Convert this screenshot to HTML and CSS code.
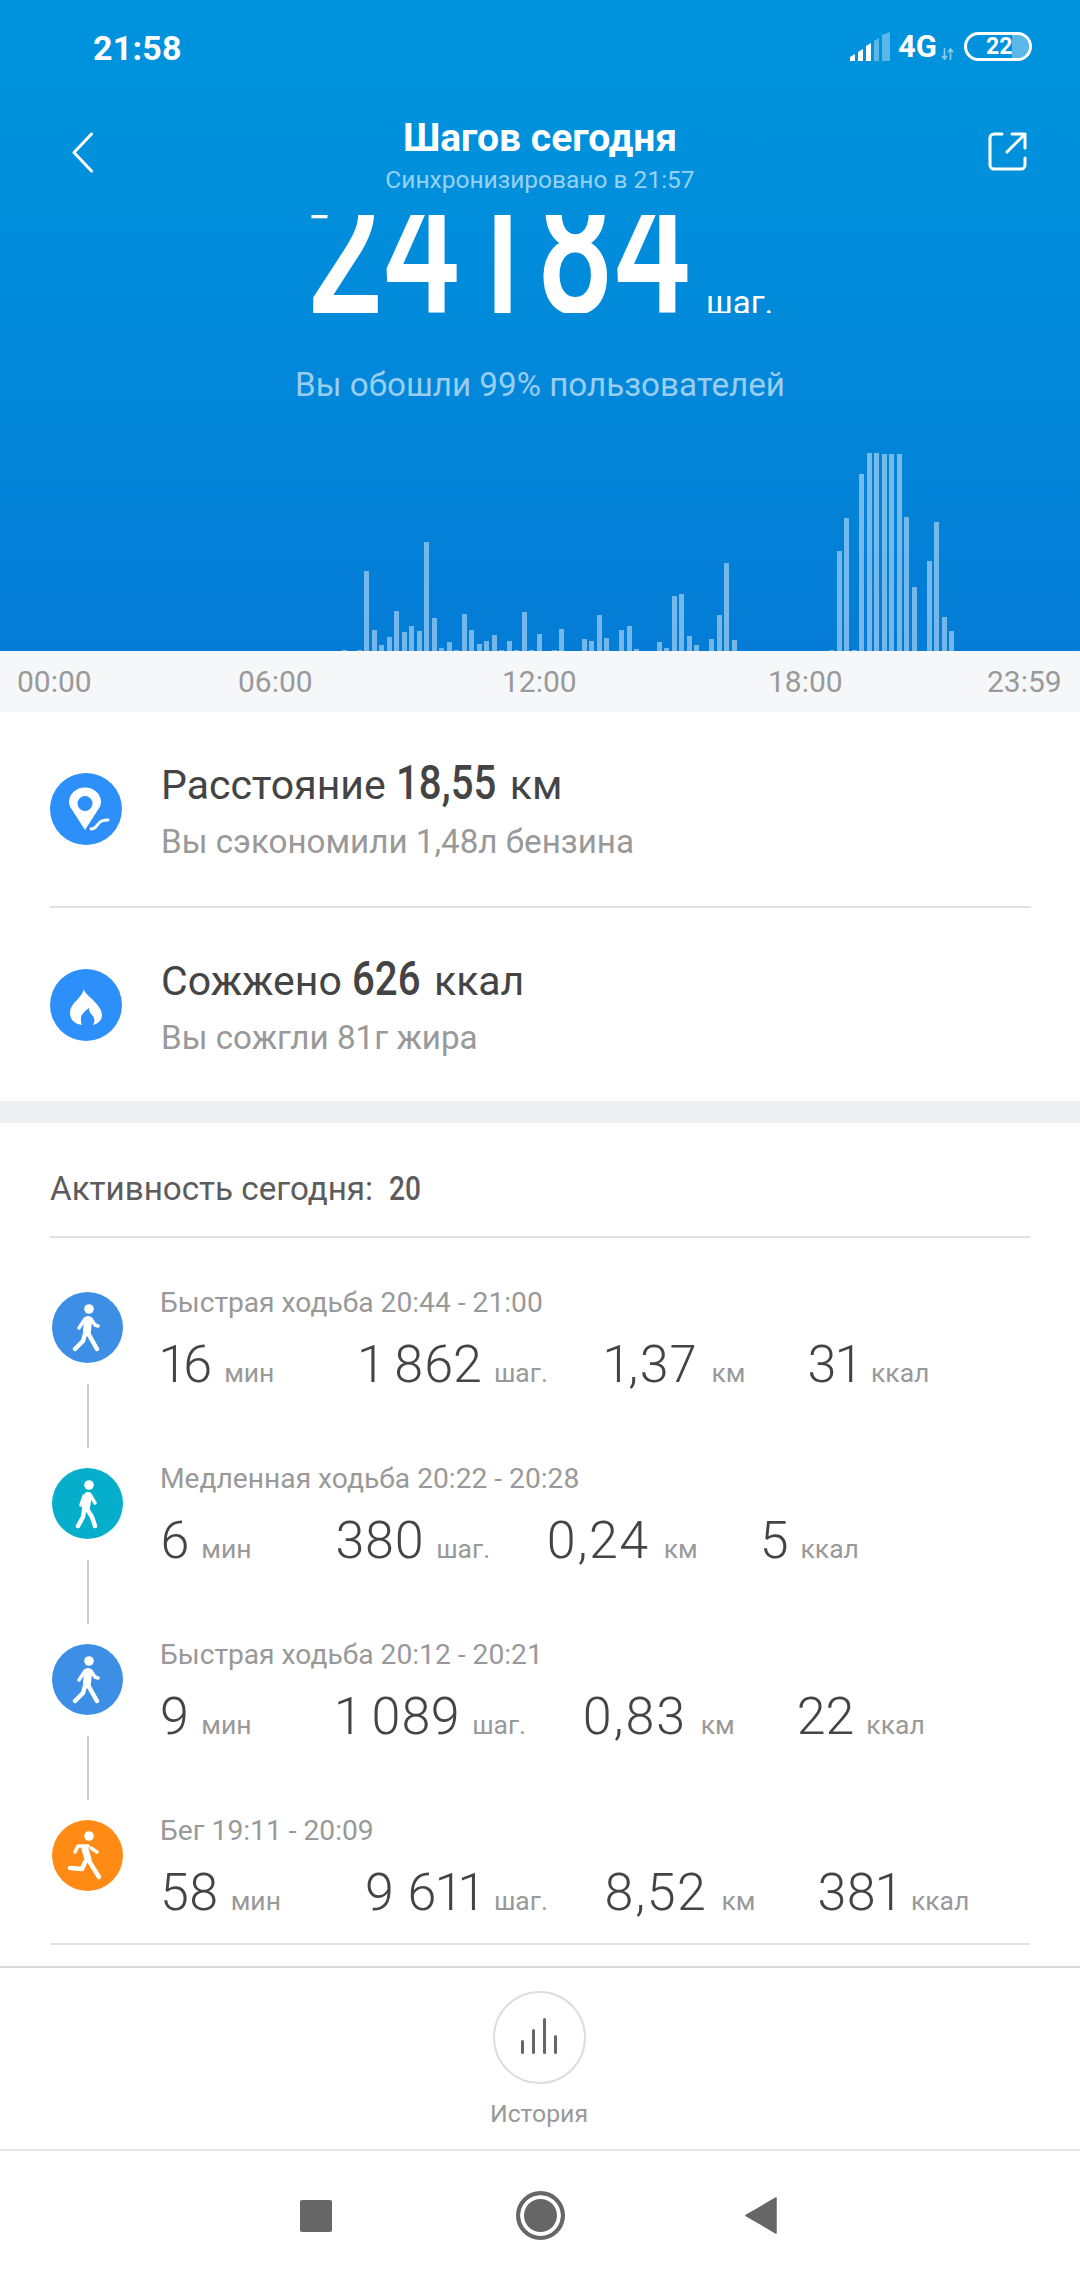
FILE: index.html
```html
<!DOCTYPE html>
<html lang="ru">
<head>
    <meta charset="UTF-8">
    <title>Шагов сегодня</title>
    <link rel="stylesheet" href="styles.css">
</head>
<body>

<div class="phone">

    <!-- Верхний блок с шагами -->
    <section class="hero">
        <div class="status">
            <span class="time">21:58</span>
            <div class="status-right">
                <svg class="signal" width="40" height="29" viewBox="0 0 40 29">
                    <path fill="#fff" d="M0 29v-4l5-3v7zM8 29v-9l5-3v12zM16 29V14l5-3v18z"/>
                    <path fill="#fff" opacity=".35" d="M24 29V9l5-3v23zM32 29V3l8-3v29z"/>
                </svg>
                <span class="net">4G</span>
                <svg class="arrows" width="13" height="12" viewBox="0 0 13 12">
                    <path fill="none" stroke="#fff" stroke-width="1.6" opacity=".55" d="M3.5 0v11M1 8l2.5 3L6 8M9.5 12V1M7 4l2.500-3L12 4"/>
                </svg>
                <div class="battery"><span>22</span><i></i></div>
            </div>
        </div>

        <div class="nav">
            <svg class="back" width="21" height="41" viewBox="0 0 21 41">
                <path fill="none" stroke="#fff" stroke-width="3" stroke-linecap="round" stroke-linejoin="round" d="M19.500 2 2 20.500 19.500 39"/>
            </svg>
            <div class="nav-title">
                <h1>Шагов сегодня</h1>
                <p>Синхронизировано в 21:57</p>
            </div>
            <svg class="share" width="39" height="39" viewBox="0 0 39 39">
                <path fill="none" stroke="#fff" stroke-width="3" stroke-linecap="round" stroke-linejoin="round" d="M14 2H6a4 4 0 0 0-4 4v27a4 4 0 0 0 4 4h27a4 4 0 0 0 4-4v-7M37 16V2H24M37 2 19 20"/>
            </svg>
        </div>

        <div class="count">
            <span class="count-num">24184</span>
            <span class="count-unit">шаг.</span>
        </div>

        <p class="rank">Вы обошли 99% пользователей</p>

        <div class="chart" id="chart"></div>
    </section>

    <div class="axis">
        <span>00:00</span>
        <span>06:00</span>
        <span>12:00</span>
        <span>18:00</span>
        <span>23:59</span>
    </div>

    <!-- Расстояние и калории -->
    <section class="stats">
        <div class="stat">
            <svg class="stat-icon" width="72" height="72" viewBox="0 0 72 72">
                <circle cx="36" cy="36" r="36" fill="#2d8ffa"/>
                <path fill="#fff" fill-rule="evenodd" d="M35 57 22.500 37.500C20.500 34.500 19 32.500 19 29a16 14.500 0 0 1 32 0c0 3.500-1.500 5.500-3.500 8.500zM35 23a7.500 7.500 0 1 0 0 15 7.500 7.500 0 0 0 0-15z"/>
                <path fill="none" stroke="#fff" stroke-width="2.800" stroke-linecap="round" d="M41 56c5 0 5-3 8-6 2-2.500 4-3 9-3"/>
            </svg>
            <div class="stat-text">
                <div class="stat-title">Расстояние <b class="num-dist">18,55</b> км</div>
                <div class="stat-sub">Вы сэкономили 1,48л бензина</div>
            </div>
        </div>
        <div class="stat">
            <svg class="stat-icon" width="72" height="72" viewBox="0 0 72 72">
                <circle cx="36" cy="36" r="36" fill="#2d8ffa"/>
                <path fill="#fff" fill-rule="evenodd" d="M33 17c1 7 5 9 10 14 5 5 9 10 9 15 0 5-4 9-9 10 2-3 2-7-1-10-2-2-3-4-3-7-4 3-9 7-8 12 0 2 0 3 1 5-7-1-12-5-12-12 0-6 4-10 8-14 4-5 7-8 5-13z"/>
            </svg>
            <div class="stat-text">
                <div class="stat-title">Сожжено <b class="num-kcal">626</b> ккал</div>
                <div class="stat-sub">Вы сожгли 81г жира</div>
            </div>
        </div>
    </section>

    <div class="band"></div>

    <!-- Активность -->
    <section class="activity">
        <div class="activity-head">Активность сегодня:<b>20</b></div>

        <div class="item">
            <div class="item-icon">
                <svg width="71" height="71" viewBox="0 0 71 71">
                    <use href="#fig-fast" class="fig-blue"/>
                </svg>
                <i class="link"></i>
            </div>
            <div class="item-body">
                <div class="item-label">Быстрая ходьба 20:44 - 21:00</div>
                <div class="vals">
                    <span class="val"><b>16</b>мин</span>
                    <span class="val"><b>1 862</b>шаг.</span>
                    <span class="val"><b>1,37</b>км</span>
                    <span class="val"><b>31</b>ккал</span>
                </div>
            </div>
        </div>

        <div class="item">
            <div class="item-icon">
                <svg width="71" height="71" viewBox="0 0 71 71">
                    <use href="#fig-slow" class="fig-teal"/>
                </svg>
                <i class="link"></i>
            </div>
            <div class="item-body">
                <div class="item-label">Медленная ходьба 20:22 - 20:28</div>
                <div class="vals">
                    <span class="val"><b>6</b>мин</span>
                    <span class="val"><b>380</b>шаг.</span>
                    <span class="val"><b>0,24</b>км</span>
                    <span class="val"><b>5</b>ккал</span>
                </div>
            </div>
        </div>

        <div class="item">
            <div class="item-icon">
                <svg width="71" height="71" viewBox="0 0 71 71">
                    <use href="#fig-fast" class="fig-blue"/>
                </svg>
                <i class="link"></i>
            </div>
            <div class="item-body">
                <div class="item-label">Быстрая ходьба 20:12 - 20:21</div>
                <div class="vals">
                    <span class="val"><b>9</b>мин</span>
                    <span class="val"><b>1 089</b>шаг.</span>
                    <span class="val"><b>0,83</b>км</span>
                    <span class="val"><b>22</b>ккал</span>
                </div>
            </div>
        </div>

        <div class="item item-last">
            <div class="item-icon">
                <svg width="71" height="71" viewBox="0 0 71 71">
                    <use href="#fig-run" class="fig-orange"/>
                </svg>
            </div>
            <div class="item-body">
                <div class="item-label">Бег 19:11 - 20:09</div>
                <div class="vals">
                    <span class="val"><b>58</b>мин</span>
                    <span class="val"><b>9 611</b>шаг.</span>
                    <span class="val"><b>8,52</b>км</span>
                    <span class="val"><b>381</b>ккал</span>
                </div>
            </div>
        </div>
    </section>

    <div class="spacer"></div>

    <!-- История -->
    <section class="history">
        <div class="history-btn">
            <i class="h1"></i><i class="h2"></i><i class="h3"></i><i class="h4"></i>
        </div>
        <span>История</span>
    </section>

    <!-- Системная панель -->
    <footer class="sysnav">
        <i class="nav-square"></i>
        <i class="nav-home"></i>
        <svg width="32" height="37" viewBox="0 0 32 37">
            <path fill="#666" d="M31 1v35L1 18.500z" stroke="#666" stroke-width="1.500" stroke-linejoin="round"/>
        </svg>
    </footer>

</div>

<!-- Фигуры для значков активности -->
<svg class="defs" width="0" height="0">
    <defs>
        <g id="fig-fast">
            <circle cx="35.500" cy="35.500" r="35.500" fill="currentColor"/>
            <circle cx="37" cy="17" r="4.800" fill="#fff"/>
            <g fill="none" stroke="#fff" stroke-linecap="round" stroke-linejoin="round">
                <path stroke-width="8" d="M36 28l-1 11"/>
                <path stroke-width="3.500" d="M33 27l-6 9M39 27l4 6 3 1"/>
                <path stroke-width="4.500" d="M33 42l-2 7-8 8M36 41l5 9 4 7"/>
            </g>
        </g>
        <g id="fig-slow">
            <circle cx="35.500" cy="35.500" r="35.500" fill="currentColor"/>
            <circle cx="37" cy="17" r="4.800" fill="#fff"/>
            <g fill="none" stroke="#fff" stroke-linecap="round" stroke-linejoin="round">
                <path stroke-width="8" d="M36 28l-2 11"/>
                <path stroke-width="3.500" d="M32 28l-3 9M39 28l4 7"/>
                <path stroke-width="4.500" d="M32 42l-1 7-5 9M35 41l5 8 3 9"/>
            </g>
        </g>
        <g id="fig-run">
            <circle cx="35.500" cy="35.500" r="35.500" fill="currentColor"/>
            <circle cx="37" cy="16" r="4.800" fill="#fff"/>
            <g fill="none" stroke="#fff" stroke-linecap="round" stroke-linejoin="round">
                <path stroke-width="7" d="M33 29l3 10"/>
                <path stroke-width="3.500" d="M36 26H26l-3 6M39 28l6 4"/>
                <path stroke-width="4.500" d="M33 42l-3 7-12-1M37 41l10 16"/>
            </g>
        </g>
    </defs>
</svg>

<script src="script.js"></script>
</body>
</html>
```

FILE: styles.css
```css
* {
    margin: 0;
    padding: 0;
    box-sizing: border-box;
}

body {
    font-family: 'Roboto', sans-serif;
    background-color: #fff;
    color: #444;
}

.phone {
    width: 1080px;
    height: 2280px;
    display: flex;
    flex-direction: column;
    overflow: hidden;
}

.defs {
    position: absolute;
}

/* hero */
.hero {
    height: 651px;
    flex: none;
    display: flex;
    flex-direction: column;
    color: #fff;
    background: linear-gradient(180deg, #0093dd 0%, #0090dc 25%, #047cd6 100%);
}

.status {
    height: 132px;
    flex: none;
    display: flex;
    justify-content: space-between;
    align-items: flex-start;
    padding: 32px 48px 0 93px;
}

.time {
    font-size: 34px;
    font-weight: 700;
    line-height: 32px;
    letter-spacing: .2px;
}

.status-right {
    display: flex;
    align-items: flex-end;
    margin-left: auto;
}

.signal {
    margin-right: 8px;
}

.net {
    font-size: 31px;
    font-weight: 700;
    line-height: 25px;
    padding-bottom: 2px;
}

.arrows {
    margin: 0 10px 1px 4px;
}

.battery {
    width: 68px;
    height: 29px;
    border: 3px solid #fff;
    border-radius: 15px;
    position: relative;
    overflow: hidden;
    display: flex;
    align-items: center;
    font-size: 23px;
    font-weight: 700;
    padding-left: 19px;
}

.battery i {
    position: absolute;
    right: 0;
    top: 0;
    bottom: 0;
    width: 17px;
    background-color: rgba(255,255,255,.35);
}

.nav {
    height: 83px;
    flex: none;
    display: grid;
    grid-template-columns: 1fr auto 1fr;
    align-items: start;
    padding: 0 53px;
}

.back {
    margin-left: 19px;
}

.share {
    justify-self: end;
}

.nav-title {
    text-align: center;
    margin-top: -14px;
}

.nav-title h1 {
    font-size: 39px;
    font-weight: 700;
    line-height: 40px;
}

.nav-title p {
    font-size: 24.500px;
    line-height: 30px;
    margin-top: 7px;
    color: rgba(255,255,255,.6);
}

.count {
    height: 98px;
    flex: none;
    overflow: hidden;
    display: flex;
    align-items: flex-start;
    padding-left: 306px;
}

/* цифры уже обычного шрифта, верх срезан шапкой */
.count-num {
    display: block;
    width: 380px;
    flex: none;
    font-size: 192px;
    font-weight: 500;
    line-height: 65px;
    white-space: nowrap;
    transform: scaleX(.705);
    transform-origin: left;
}

.count-unit {
    align-self: flex-end;
    font-size: 33px;
    line-height: 20px;
    margin-left: 20px;
}

.rank {
    text-align: center;
    font-size: 33.200px;
    line-height: 40px;
    margin-top: 52px;
    color: rgba(255,255,255,.6);
}

.chart {
    flex: 1;
    display: flex;
    align-items: flex-end;
    padding-left: 4px;
    overflow: hidden;
}

.chart i {
    flex: none;
    width: 5px;
    margin-right: 2.5px;
    background-color: rgba(255,255,255,.45);
}

/* axis */
.axis {
    height: 61px;
    flex: none;
    display: grid;
    grid-template-columns: 221px 264px 266px 219px auto;
    align-items: center;
    padding-left: 17px;
    font-size: 30px;
    color: #999;
    background-color: #f6f7f9;
}

/* stats */
.stats {
    padding: 0 49px 0 50px;
}

.stat {
    height: 194px;
    display: flex;
    align-items: center;
    gap: 39px;
}

.stat + .stat {
    height: 195px;
    border-top: 2px solid #e2e2e2;
}

.stat-icon {
    flex: none;
}

.stat-text {
    margin-top: 2px;
}

.stat-title {
    font-size: 41px;
    line-height: 50px;
    color: #444;
}

.stat-title b {
    display: inline-block;
    font-size: 49px;
    font-weight: 500;
    transform: scaleX(.82);
    transform-origin: left;
}

.num-dist {
    margin-right: -.38em;
}

.num-kcal {
    margin-right: -.24em;
}

.stat-sub {
    font-size: 33.200px;
    line-height: 40px;
    margin-top: 12px;
    color: #999;
}

.band {
    height: 22px;
    flex: none;
    background-color: #eeeff1;
}

/* activity */
.activity-head {
    height: 115px;
    margin: 0 50px 54px;
    padding-top: 48px;
    border-bottom: 2px solid #e2e2e2;
    font-size: 33.200px;
    line-height: 36px;
    color: #5c5c5c;
}

.activity-head b {
    display: inline-block;
    font-size: 33px;
    font-weight: 500;
    margin-left: 16px;
    transform: scaleX(.85);
    transform-origin: left;
}

.item {
    height: 176px;
    display: flex;
    padding-left: 52px;
}

.item-last {
    height: 123px;
    margin: 0 50px;
    padding-left: 2px;
    border-bottom: 2px solid #e2e2e2;
    box-sizing: content-box;
}

.item-icon {
    width: 108px;
    flex: none;
}

.item-icon svg {
    display: block;
}

.link {
    display: block;
    width: 2px;
    height: 64px;
    margin: 21px 0 0 35px;
    background-color: #ccc;
}

.item-label {
    font-size: 28.200px;
    line-height: 22px;
    color: #999;
}

.vals {
    display: flex;
    margin-top: 21px;
}

.val {
    display: flex;
    align-items: baseline;
    font-size: 26.500px;
    line-height: 60px;
    color: #999;
}

.val b {
    font-size: 52px;
    font-weight: 300;
    font-feature-settings: 'pnum';
    color: #444;
    margin-right: 12px;
}

.val:nth-child(2) {
    margin-left: 84px;
}

.val:nth-child(3) {
    margin-left: 56px;
}

.val:nth-child(3) b {
    letter-spacing: 1.5px;
    margin-right: 14px;
}

.val:nth-child(4) {
    margin-left: 62px;
}

.fig-blue {
    color: #3d8fe6;
}

.fig-teal {
    color: #05aecb;
}

.fig-orange {
    color: #ff8a14;
}

/* bottom */
.spacer {
    flex: 1;
}

.history {
    height: 185px;
    flex: none;
    border-top: 2px solid #d9d9d9;
    border-bottom: 2px solid #e6e6e6;
    display: flex;
    flex-direction: column;
    align-items: center;
    padding: 23px 2px 0 0;
    font-size: 24.800px;
    color: #999;
}

.history span {
    margin-top: 15px;
    line-height: 30px;
}

.history-btn {
    width: 93px;
    height: 93px;
    border: 2px solid #ddd;
    border-radius: 50%;
    display: flex;
    justify-content: center;
    align-items: flex-end;
    gap: 8px;
    padding-bottom: 28px;
}

.history-btn i {
    width: 3px;
    border-radius: 2px;
    background-color: #666;
}

.h1 { height: 14px; }
.h2 { height: 25px; }
.h3 { height: 36px; }
.h4 { height: 19px; }

.sysnav {
    height: 129px;
    flex: none;
    display: flex;
    align-items: center;
    padding: 0 0 0 300px;
}

.nav-square {
    width: 32px;
    height: 32px;
    border-radius: 2px;
    background-color: #666;
}

.nav-home {
    width: 49px;
    height: 49px;
    margin: 0 180px 0 184px;
    border: 4px solid #666;
    border-radius: 50%;
    background-color: #666;
    box-shadow: inset 0 0 0 4px #fff;
}
```

FILE: script.js
```js
// высота столбиков за каждые 10 минут
const bars = {
    45: 1, 47: 1, 48: 80, 49: 21, 50: 6, 51: 14, 52: 40, 53: 19, 54: 25, 55: 20,
    56: 109, 57: 33, 58: 3, 59: 9, 60: 1, 61: 37, 62: 21, 63: 7, 64: 10, 65: 16,
    66: 1, 67: 10, 68: 1, 69: 39, 70: 1, 71: 17, 73: 1, 74: 22, 77: 12, 78: 10,
    79: 36, 80: 13, 82: 21, 83: 25, 84: 2, 87: 9, 88: 3, 89: 55, 90: 57, 91: 15,
    92: 6, 94: 12, 95: 36, 96: 88, 97: 11, 110: 1, 111: 100, 112: 133, 113: 1,
    114: 177, 115: 198, 116: 198, 117: 197, 118: 197, 119: 197, 120: 134, 121: 64,
    123: 90, 124: 129, 125: 34, 126: 20
};

const chart = document.getElementById('chart');

for (let i = 0; i < 143; i++) {
    const bar = document.createElement('i');
    bar.style.height = (bars[i] || 0) + 'px';
    chart.appendChild(bar);
}
```
